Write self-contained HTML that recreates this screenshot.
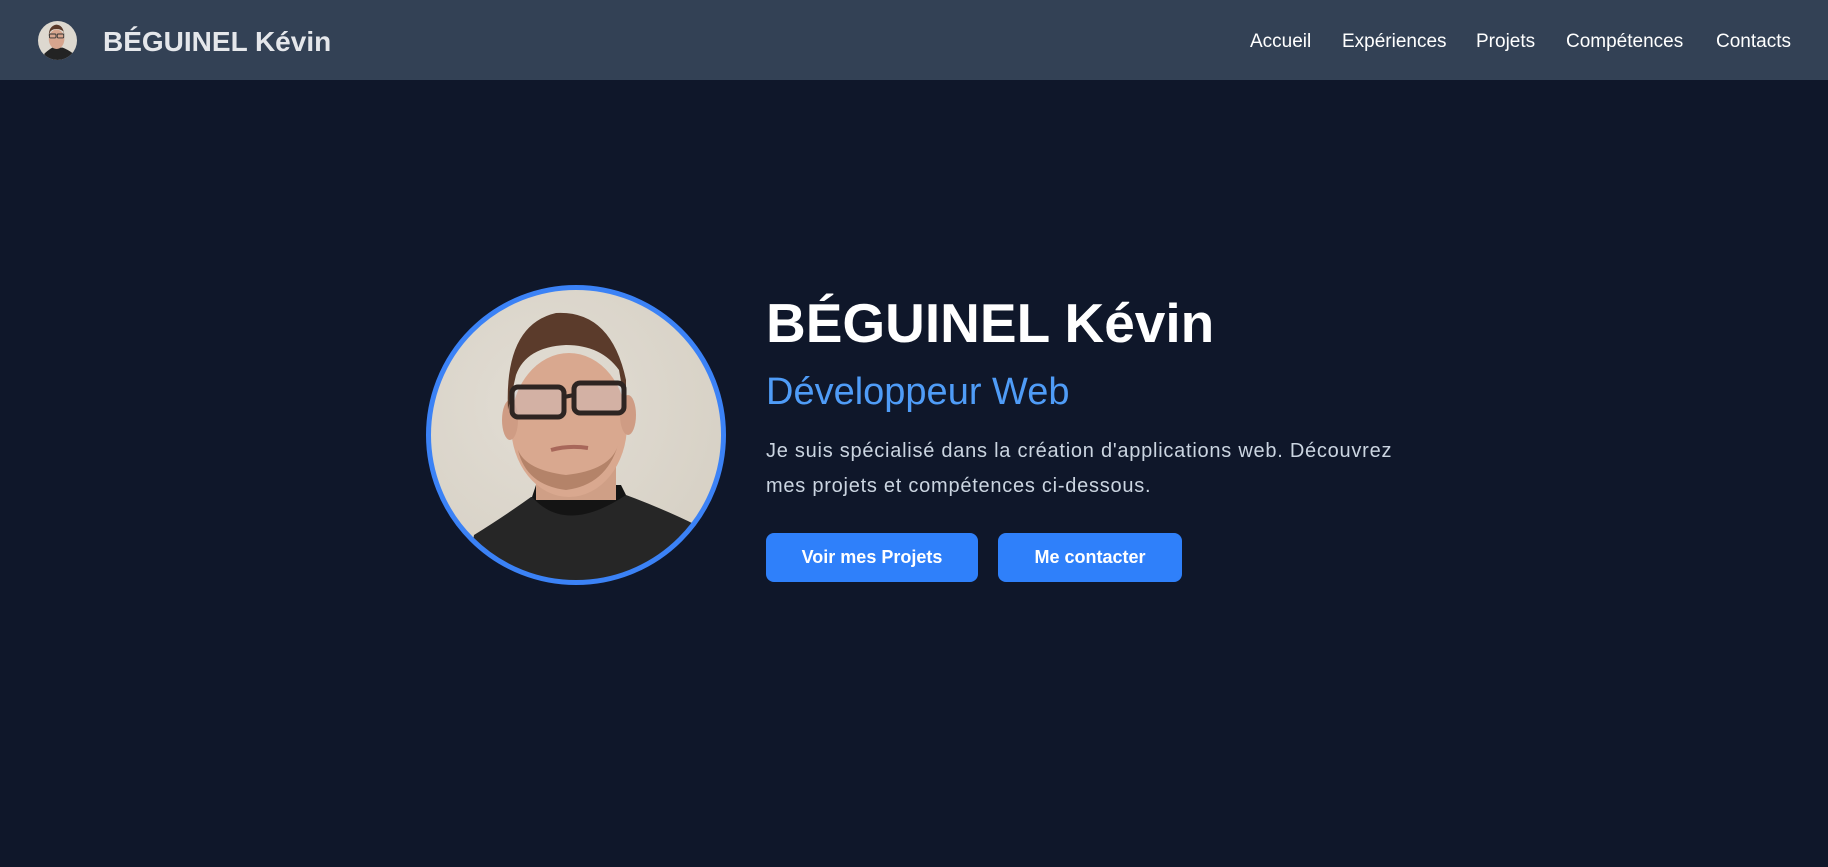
<!DOCTYPE html>
<html><head><meta charset="utf-8">
<style>
*{margin:0;padding:0;box-sizing:border-box}
html,body{width:1828px;height:867px;overflow:hidden;background:#0f172a;font-family:"Liberation Sans",sans-serif}
.nav{position:absolute;left:0;top:0;width:1828px;height:80px;background:#334155}
.abs{position:absolute;white-space:nowrap}
.navlink{color:#fff;font-size:19px;line-height:19px;top:32px}
.btn{position:absolute;top:533px;height:49px;background:#2f80fa;border-radius:8px;color:#fff;font-weight:bold;font-size:18px;display:flex;align-items:center;justify-content:center}
</style></head><body>
<div class="nav">
  <svg class="abs" style="left:38px;top:21px" width="39" height="39" viewBox="0 0 300 300">
    <defs><clipPath id="c1"><circle cx="150" cy="150" r="150"/></clipPath></defs>
    <g clip-path="url(#c1)">
      <rect width="300" height="300" fill="#ddd8cf"/>
      <path d="M40 300 L50 250 Q90 215 110 205 L190 205 Q230 220 270 250 L280 300Z" fill="#232323"/>
      <ellipse cx="143" cy="140" rx="60" ry="75" fill="#d7a58e"/>
      <path d="M83 120 Q80 40 140 28 Q195 30 203 110 L195 80 Q170 60 140 62 Q100 62 88 95Z" fill="#5a3a2a"/>
      <rect x="88" y="100" width="50" height="30" rx="6" fill="none" stroke="#333" stroke-width="7"/>
      <rect x="148" y="100" width="50" height="30" rx="6" fill="none" stroke="#333" stroke-width="7"/>
    </g>
  </svg>
  <div class="abs" style="left:103px;top:28px;color:#e5e7eb;font-weight:bold;font-size:28px;line-height:28px">BÉGUINEL Kévin</div>
  <div class="abs navlink" style="left:1250px">Accueil</div>
  <div class="abs navlink" style="left:1342px">Expériences</div>
  <div class="abs navlink" style="left:1476px">Projets</div>
  <div class="abs navlink" style="left:1566px">Compétences</div>
  <div class="abs navlink" style="left:1716px">Contacts</div>
</div>

<svg class="abs" style="left:426px;top:285px" width="300" height="300" viewBox="0 0 300 300">
  <defs><clipPath id="c2"><circle cx="150" cy="150" r="147"/></clipPath>
  <radialGradient id="bg" cx="0.4" cy="0.4" r="0.7"><stop offset="0" stop-color="#e2ddd4"/><stop offset="1" stop-color="#d6d0c4"/></radialGradient></defs>
  <g clip-path="url(#c2)">
    <rect width="300" height="300" fill="url(#bg)"/>
    <path d="M40 300 L48 250 Q80 230 105 212 L200 210 Q240 225 270 240 L285 300Z" fill="#262626"/>
    <path d="M106 212 Q140 250 200 210 L195 200 L110 200Z" fill="#141414"/>
    <rect x="110" y="170" width="80" height="45" fill="#cf9f86"/>
    <ellipse cx="143" cy="140" rx="58" ry="72" fill="#d9a88f"/>
    <ellipse cx="84" cy="135" rx="8" ry="20" fill="#cf9c84"/>
    <ellipse cx="202" cy="130" rx="8" ry="20" fill="#cf9c84"/>
    <path d="M92 165 Q100 200 140 205 Q180 200 192 160 Q185 185 140 190 Q100 185 92 165Z" fill="#9b6a50" opacity="0.6"/>
    <path d="M82 125 Q78 40 130 28 Q185 25 200 95 L200 125 L193 85 Q175 60 140 60 Q100 62 90 90Z" fill="#5b3b2b"/>
    <rect x="86" y="102" width="52" height="30" rx="6" fill="#c8c8d8" fill-opacity="0.3" stroke="#2e2522" stroke-width="5"/>
    <rect x="148" y="98" width="50" height="30" rx="6" fill="#c8c8d8" fill-opacity="0.3" stroke="#2e2522" stroke-width="5"/>
    <path d="M138 112 L148 110" stroke="#2e2522" stroke-width="4"/>
    <path d="M125 165 Q143 160 162 163" stroke="#a8675a" stroke-width="4" fill="none"/>
  </g>
  <circle cx="150" cy="150" r="147.5" fill="none" stroke="#3b82f6" stroke-width="5"/>
</svg>

<div class="abs" style="left:766px;top:296px;color:#fff;font-weight:bold;font-size:55px;line-height:55px">BÉGUINEL Kévin</div>
<div class="abs" style="left:766px;top:373px;color:#4f9cf7;font-size:38px;line-height:38px">Développeur Web</div>
<div class="abs" style="left:766px;top:434px;color:#cbd5e1;font-size:20px;line-height:35px;letter-spacing:0.75px">Je suis spécialisé dans la création d'applications web. Découvrez<br>mes projets et compétences ci-dessous.</div>
<div class="btn" style="left:766px;width:212px">Voir mes Projets</div>
<div class="btn" style="left:998px;width:184px">Me contacter</div>
</body></html>
